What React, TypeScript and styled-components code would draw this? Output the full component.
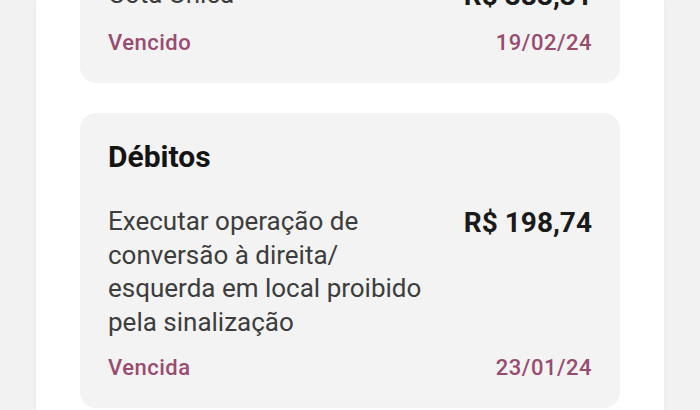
import React from "react"
import styled, { createGlobalStyle } from "styled-components"

const GlobalStyle = createGlobalStyle`
  html, body {
    margin: 0;
    padding: 0;
    background: #f2f2f2;
    font-family: Roboto, "Noto Sans", "Liberation Sans", sans-serif;
    -webkit-font-smoothing: antialiased;
  }
`

type Debt = {
  title?: string
  description: string
  amount: string
  status: string
  date: string
}

const DEBTS: Array<Debt> = [
  {
    description: "Cota Única",
    amount: "R$ 383,31",
    status: "Vencido",
    date: "19/02/24",
  },
  {
    title: "Débitos",
    description:
      "Executar operação de conversão à direita/ esquerda em local proibido pela sinalização",
    amount: "R$ 198,74",
    status: "Vencida",
    date: "23/01/24",
  },
]

const Screen = styled.div`
  height: 410px;
  overflow: hidden;
  display: flex;
  justify-content: center;
`

const Panel = styled.main`
  width: 628px;
  background: #ffffff;
  box-shadow: 0 0 6px rgba(0, 0, 0, 0.04);
`

// the list is scrolled, so the first card is cut at the top
const List = styled.div`
  display: flex;
  flex-direction: column;
  gap: 30px;
  padding: 0 44px;
  margin-top: -48px;
`

const Card = styled.section`
  background: #f3f3f3;
  border-radius: 16px;
  padding: 26px 28px 26px;
  display: flex;
  flex-direction: column;
`

const Title = styled.h2`
  margin: 0 0 30px;
  font-size: 30px;
  line-height: 36px;
  font-weight: 700;
  color: #141414;
`

const Row = styled.div`
  display: flex;
  justify-content: space-between;
  align-items: flex-start;
  gap: 24px;
`

const Description = styled.p`
  margin: 0;
  max-width: 330px;
  font-size: 26px;
  line-height: 33.5px;
  color: #3d3d3d;
`

const Amount = styled.span`
  font-size: 28px;
  line-height: 36px;
  font-weight: 700;
  color: #1a1a1a;
  white-space: nowrap;
`

const Footer = styled(Row)`
  margin-top: 15px;
  align-items: center;
`

const Status = styled.span`
  font-size: 22px;
  line-height: 28px;
  font-weight: 500;
  letter-spacing: 0.5px;
  color: #9a4b70;
`

export default function App() {
  return (
    <>
      <GlobalStyle />
      <Screen>
        <Panel>
          <List>
            {DEBTS.map((debt) => (
              <Card key={debt.date}>
                {debt.title ? <Title>{debt.title}</Title> : null}
                <Row>
                  <Description>{debt.description}</Description>
                  <Amount>{debt.amount}</Amount>
                </Row>
                <Footer>
                  <Status>{debt.status}</Status>
                  <Status>{debt.date}</Status>
                </Footer>
              </Card>
            ))}
          </List>
        </Panel>
      </Screen>
    </>
  )
}
